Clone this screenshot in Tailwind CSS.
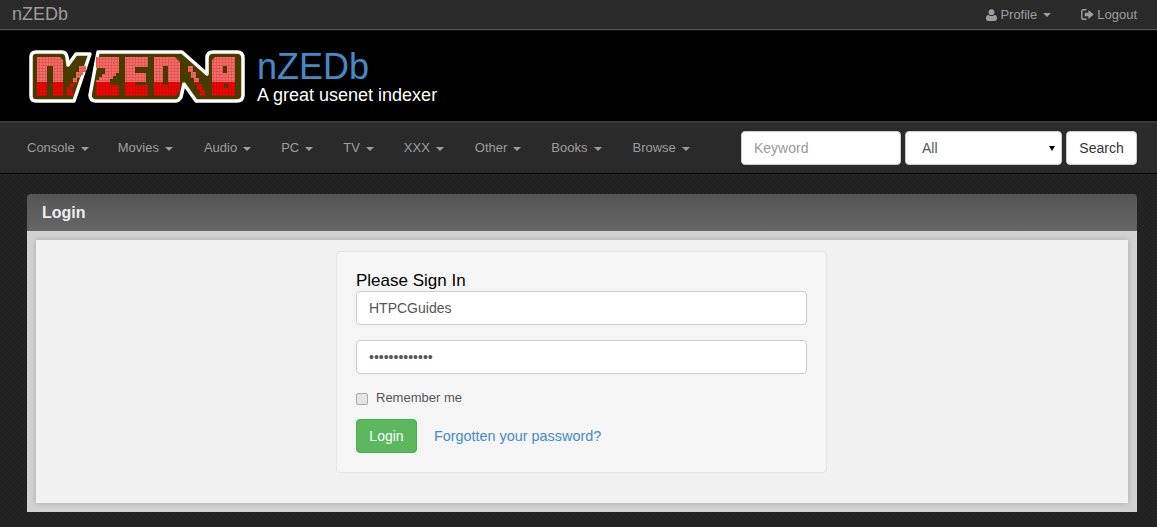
<!DOCTYPE html>
<html lang="en">
<head>
    <meta charset="UTF-8">
    <meta name="viewport" content="width=device-width, initial-scale=1.0">
    <title>nZEDb - Login</title>
    <script src="https://cdn.jsdelivr.net/npm/@tailwindcss/browser@4"></script>
</head>
<body class="min-h-screen overflow-hidden bg-[#232323] bg-[repeating-conic-gradient(#252525_0_25%,#212121_0_50%)] bg-[length:4px_4px] font-['Liberation_Sans',Arial,sans-serif] text-[14px]">

    <!-- top bar -->
    <div class="h-[30px] flex items-center justify-between border-b border-[#555] bg-[#2b2b2b] bg-[repeating-conic-gradient(#2c2c2c_0_25%,#292929_0_50%)] bg-[length:4px_4px] pl-[12px] pr-[20px]">
        <a href="#" class="text-[18px] text-[#9d9d9d]">nZEDb</a>
        <div class="flex items-center text-[13px] text-[#9d9d9d]">
            <a href="#" class="flex items-center">
                <svg viewBox="0 0 12 13" class="w-[11px] h-[12px] mr-[3px] fill-[#9d9d9d]">
                    <circle cx="6" cy="3.4" r="3.2" />
                    <path d="M2.6 6.2 C3.4 7.3 4.6 7.7 6 7.7 C7.4 7.7 8.6 7.3 9.4 6.2 C11 6.5 12 8 12 10.4 C12 12 11 13 9.6 13 H2.4 C1 13 0 12 0 10.4 C0 8 1 6.5 2.6 6.2 Z" />
                </svg>
                Profile
                <span class="ml-[6px] mt-[1px] w-0 h-0 border-x-[4px] border-x-transparent border-t-[4px] border-t-[#9d9d9d]"></span>
            </a>
            <a href="#" class="flex items-center ml-[30px]">
                <svg viewBox="0 0 14 12" class="w-[13px] h-[11px] mr-[3px] fill-[#9d9d9d]">
                    <path d="M2.5 0 H6 V1.6 H2.8 C2 1.6 1.6 2 1.6 2.8 V9.2 C1.6 10 2 10.4 2.8 10.4 H6 V12 H2.5 C1 12 0 11 0 9.5 V2.5 C0 1 1 0 2.5 0 Z" />
                    <path d="M8 1.2 L13.8 6 L8 10.8 V8 H4 V4 H8 Z" />
                </svg>
                Logout
            </a>
        </div>
    </div>

    <!-- logo header -->
    <div class="h-[93px] flex items-center bg-black border-t border-[#111] border-b-2 border-b-[#3a3a3a] pl-[27px]">
        <svg viewBox="27 47 220 58" class="w-[220px] h-[58px] mt-[-1px]">
            <defs>
                <pattern id="pinkDots" x="37" y="57" width="3" height="3" patternUnits="userSpaceOnUse">
                    <rect width="3" height="3" fill="#c8524a" />
                    <rect width="2.4" height="2.4" fill="#ff6868" />
                </pattern>
                <pattern id="redDots" x="37" y="57" width="3" height="3" patternUnits="userSpaceOnUse">
                    <rect width="3" height="3" fill="#a51208" />
                    <rect width="2.4" height="2.4" fill="#ff0000" />
                </pattern>
                <clipPath id="logoShapes">
                    <!-- n -->
                    <path d="M37 57 H60 L63 60 V96 H53 V66 H47 V96 H37 Z" />
                    <!-- slash -->
                    <path d="M79 66 H86 V72 H83 V75 H80 V78 H77 V84 H74 V87 H71 V90 H73 V96 H67 V87 H70 V84 H73 V78 H76 V72 H79 Z" />
                    <!-- Z -->
                    <path d="M96 57 H119 V73 H116 V76 H113 V79 H110 V85 H119 V96 H96 V80 H99 V77 H102 V74 H105 V68 H96 Z" />
                    <!-- E -->
                    <path d="M125 57 H148 V67 H135 V73 H146 V82 H135 V85 H148 V96 H125 Z" />
                    <!-- D -->
                    <path d="M154 57 H175 L180 62 V91 L175 96 H154 Z M163 66 V85 H168 V66 Z" fill-rule="evenodd" clip-rule="evenodd" />
                    <!-- backslash -->
                    <path d="M188 66 H193 V72 H196 V78 H199 V84 H202 V90 H205 V96 H200 V90 H197 V84 H194 V78 H191 V72 H188 Z" />
                    <!-- b -->
                    <path d="M215 57 H235 V96 H212 V60 Z M223 66 V73 H227 V66 Z M224 84 V88 H228 V84 Z" fill-rule="evenodd" clip-rule="evenodd" />
                </clipPath>
            </defs>
            <g fill="#473b00" stroke="#fff" stroke-width="3.5" stroke-linejoin="round">
                <path d="M36 52 H62 Q66 52 67 57 L68 65 L76 54 H90 L74 101 H36 Q31 101 31 96 V57 Q31 52 36 52 Z" />
                <path d="M98 52 H182 L207 74 V58 Q207 52 213 52 H237 Q243 52 243 58 V95 Q243 101 237 101 H196 L184 84 L181 97 Q179 101 175 101 H96 Q90 101 90 95 Z" />
            </g>
            <g clip-path="url(#logoShapes)">
                <rect x="30" y="55" width="215" height="27" fill="url(#pinkDots)" />
                <rect x="30" y="82" width="215" height="17" fill="url(#redDots)" />
            </g>
        </svg>
        <div class="ml-[10px] mt-[2px]">
            <div class="text-[36px] leading-[36px] text-[#428bca]">nZEDb</div>
            <div class="text-[18px] leading-[20px] text-white">A great usenet indexer</div>
        </div>
    </div>

    <!-- main nav -->
    <div class="h-[51px] flex items-center justify-between border-b border-black bg-[#2b2b2b] bg-[repeating-conic-gradient(#2c2c2c_0_25%,#292929_0_50%)] bg-[length:4px_4px] pl-[12px] pr-[20px]">
        <div class="flex text-[13px] text-[#9d9d9d]">
            <a href="#" class="flex items-center pl-[15px] pr-[14px]">Console<span class="ml-[6px] mt-[1px] w-0 h-0 border-x-[4px] border-x-transparent border-t-[4px] border-t-[#9d9d9d]"></span></a>
            <a href="#" class="flex items-center pl-[15px] pr-[16px]">Movies<span class="ml-[6px] mt-[1px] w-0 h-0 border-x-[4px] border-x-transparent border-t-[4px] border-t-[#9d9d9d]"></span></a>
            <a href="#" class="flex items-center px-[15px]">Audio<span class="ml-[6px] mt-[1px] w-0 h-0 border-x-[4px] border-x-transparent border-t-[4px] border-t-[#9d9d9d]"></span></a>
            <a href="#" class="flex items-center px-[15px]">PC<span class="ml-[6px] mt-[1px] w-0 h-0 border-x-[4px] border-x-transparent border-t-[4px] border-t-[#9d9d9d]"></span></a>
            <a href="#" class="flex items-center px-[15px]">TV<span class="ml-[6px] mt-[1px] w-0 h-0 border-x-[4px] border-x-transparent border-t-[4px] border-t-[#9d9d9d]"></span></a>
            <a href="#" class="flex items-center pl-[15px] pr-[16px]">XXX<span class="ml-[6px] mt-[1px] w-0 h-0 border-x-[4px] border-x-transparent border-t-[4px] border-t-[#9d9d9d]"></span></a>
            <a href="#" class="flex items-center px-[15px]">Other<span class="ml-[6px] mt-[1px] w-0 h-0 border-x-[4px] border-x-transparent border-t-[4px] border-t-[#9d9d9d]"></span></a>
            <a href="#" class="flex items-center pl-[15px] pr-[16px]">Books<span class="ml-[6px] mt-[1px] w-0 h-0 border-x-[4px] border-x-transparent border-t-[4px] border-t-[#9d9d9d]"></span></a>
            <a href="#" class="flex items-center px-[15px]">Browse<span class="ml-[6px] mt-[1px] w-0 h-0 border-x-[4px] border-x-transparent border-t-[4px] border-t-[#9d9d9d]"></span></a>
        </div>
        <form class="flex gap-[4px]">
            <input type="text" placeholder="Keyword" class="w-[160px] h-[34px] px-[12px] bg-white border border-[#ccc] rounded-[4px] text-[#555] placeholder:text-[#999]">
            <div class="relative">
                <select class="block appearance-none w-[157px] h-[34px] pl-[16px] bg-white border border-[#ccc] rounded-[4px] text-[#555]">
                    <option>All</option>
                </select>
                <span class="absolute right-[7px] top-[15px] w-0 h-0 border-x-[3px] border-x-transparent border-t-[5px] border-t-black"></span>
            </div>
            <button type="button" class="w-[71px] h-[34px] bg-white border border-[#ccc] rounded-[4px] text-[#333]">Search</button>
        </form>
    </div>

    <!-- login panel -->
    <div class="ml-[27px] mr-[20px] mt-[20px]">
        <div class="h-[37px] flex items-center pl-[15px] rounded-t-[4px] bg-linear-to-b from-[#555] to-[#666] text-[16px] font-bold text-[#eee]">Login</div>
        <div class="p-[9px] bg-[#d2d2d2]">
            <div class="h-[263px] pt-[11px] bg-[#f1f1f1] shadow-[0_0_6px_rgba(0,0,0,0.2)]">
                <div class="w-[491px] h-[222px] ml-[300px] px-[19px] pt-[19px] bg-[#f5f5f5] border border-[#e3e3e3] rounded-[4px]">
                    <h2 class="text-[17px] leading-[20px] text-black">Please Sign In</h2>
                    <input type="text" value="HTPCGuides" class="block w-full h-[34px] px-[12px] bg-white border border-[#ccc] rounded-[4px] text-[#555]">
                    <input type="password" value="1234567890123" class="block w-full h-[34px] mt-[15px] px-[12px] bg-white border border-[#ccc] rounded-[4px] text-[#555]">
                    <label class="flex items-center mt-[15px] h-[18px] text-[#555]">
                        <input type="checkbox" class="appearance-none w-[12px] h-[12px] mt-[1px] bg-[#e4e4e4] border border-[#aaa] rounded-[2px]">
                        <span class="ml-[8px] mt-[-1px] text-[13px]">Remember me</span>
                    </label>
                    <div class="flex items-center mt-[12px]">
                        <button type="button" class="w-[61px] h-[34px] bg-[#5cb85c] border border-[#4cae4c] rounded-[4px] text-white">Login</button>
                        <a href="#" class="ml-[17px] mt-[1px] text-[14.4px] text-[#428bca]">Forgotten your password?</a>
                    </div>
                </div>
            </div>
        </div>
    </div>
</body>
</html>
